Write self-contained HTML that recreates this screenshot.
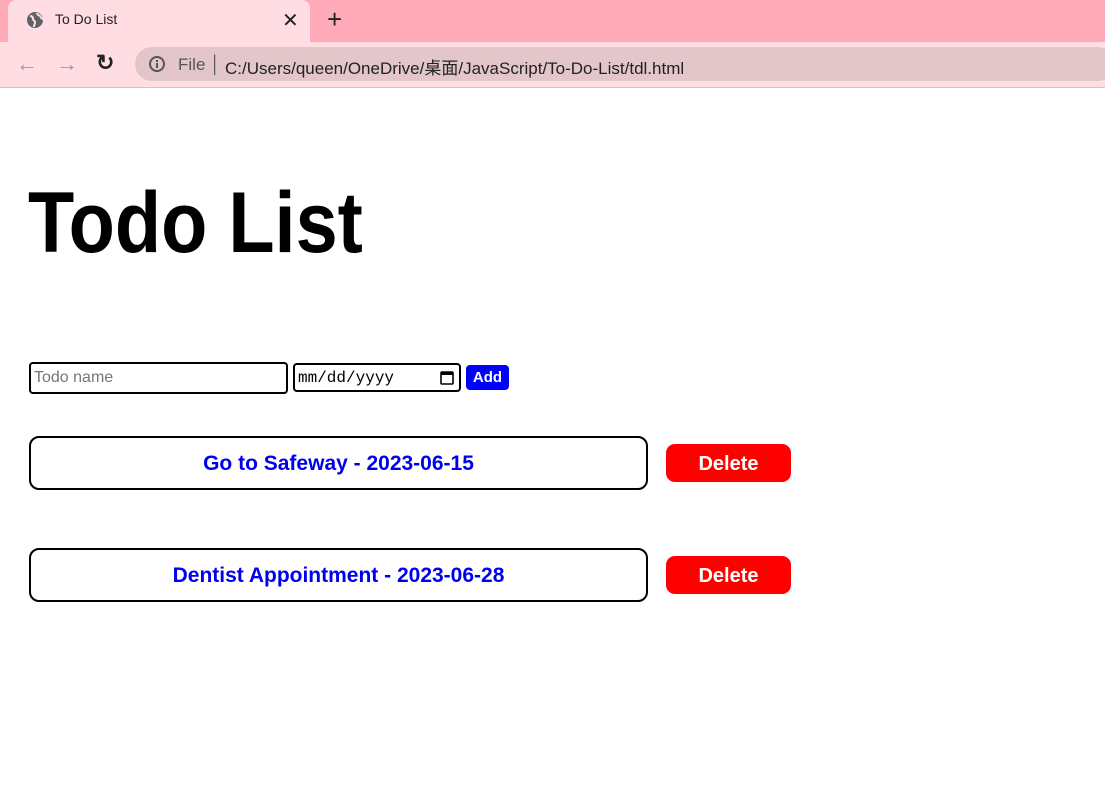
<!DOCTYPE html>
<html><head><meta charset="utf-8"><style>
body{margin:0;width:1105px;height:785px;overflow:hidden;background:#fff;font-family:"Liberation Sans","Noto Sans CJK SC",sans-serif;position:relative}
.tabbar{position:absolute;left:0;top:0;width:1105px;height:42px;background:#ffaab8}
.tab{position:absolute;left:8px;top:0;width:302px;height:42px;background:#ffdde3;border-radius:8px 8px 0 0}
.tb{position:absolute;left:0;top:42px;width:1105px;height:45px;background:#ffdde3;border-bottom:1px solid #d8c0c4}
.omni{position:absolute;left:135px;top:47px;width:980px;height:34px;border-radius:17px;background:#e2c6ca}
.t{position:absolute;white-space:nowrap}
h1{position:absolute;left:28px;top:180px;margin:0;font-weight:bold;font-size:86px;line-height:1;transform:scaleX(0.88);transform-origin:0 0;white-space:nowrap}
.inp{position:absolute;border:2px solid #000;border-radius:4px;box-sizing:border-box;background:#fff}
.item{position:absolute;left:29px;width:619px;height:54px;border:2px solid #000;border-radius:10px;box-sizing:border-box;color:#0000ee;font-weight:bold;font-size:21px;text-align:center;line-height:52px}
.del{position:absolute;left:666px;width:125px;height:38px;background:#f00;border-radius:9px;color:#fff;font-weight:bold;font-size:20px;text-align:center;line-height:40px}
</style></head><body>
<div class="tabbar"></div>
<div class="tab"></div>
<svg class="t" style="left:26px;top:11px" width="18" height="18" viewBox="0 0 18 18"><circle cx="9" cy="9" r="8" fill="#5f6368"/><path d="M4 5c2 0 3 1 3 3s2 1 2 3-1 3-1 5M11 2c0 2 2 2 3 3s1 3 3 3" stroke="#ffdde3" stroke-width="2" fill="none"/></svg>
<div class="t" style="left:55px;top:11px;font-size:14px;color:#222">To Do List</div>
<div class="t" style="left:282px;top:8px;font-size:20px;color:#222">✕</div>
<div class="t" style="left:327px;top:4px;font-size:26px;color:#222">+</div>
<div class="tb"></div>
<div class="t" style="left:16px;top:51px;font-size:22px;color:#999">←</div>
<div class="t" style="left:56px;top:51px;font-size:22px;color:#999">→</div>
<div class="t" style="left:96px;top:50px;font-size:22px;color:#222;font-weight:bold">↻</div>
<div class="omni"></div>
<svg class="t" style="left:148px;top:55px" width="18" height="18" viewBox="0 0 18 18"><circle cx="9" cy="9" r="7" stroke="#555" stroke-width="2" fill="none"/><rect x="8" y="8" width="2" height="5" fill="#555"/><rect x="8" y="5" width="2" height="2" fill="#555"/></svg>
<div class="t" style="left:178px;top:55px;font-size:17px;color:#555">File │</div>
<div class="t" style="left:225px;top:54px;font-size:17px;color:#222">C:/Users/queen/OneDrive/桌面/JavaScript/To-Do-List/tdl.html</div>
<h1>Todo List</h1>
<div class="inp" style="left:29px;top:362px;width:259px;height:32px"><span class="t" style="left:3px;top:5px;font-size:16px;color:#777">Todo name</span></div>
<div class="inp" style="left:293px;top:363px;width:168px;height:29px"><span class="t" style="left:3px;top:4px;font-size:16px;font-family:'Liberation Mono',monospace">mm/dd/yyyy</span><svg class="t" style="left:145px;top:5px" width="14" height="15" viewBox="0 0 14 15"><rect x="1" y="2" width="12" height="12" rx="1" stroke="#000" stroke-width="1.6" fill="none"/><rect x="1" y="2" width="12" height="3" fill="#000"/></svg></div>
<div class="t" style="left:466px;top:365px;width:43px;height:25px;background:#0000ff;border-radius:4px;color:#fff;font-weight:bold;font-size:15px;text-align:center;line-height:25px">Add</div>
<div class="item" style="top:436px">Go to Safeway - 2023-06-15</div>
<div class="del" style="top:444px">Delete</div>
<div class="item" style="top:548px">Dentist Appointment - 2023-06-28</div>
<div class="del" style="top:556px">Delete</div>
</body></html>
